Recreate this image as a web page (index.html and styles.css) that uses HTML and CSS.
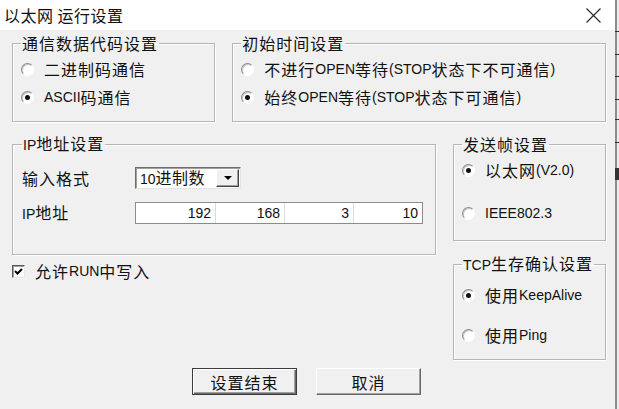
FILE: index.html
```html
<!DOCTYPE html>
<html lang="zh-CN">
<head>
    <meta charset="UTF-8">
    <title>以太网 运行设置</title>
    <link rel="stylesheet" href="styles.css">
</head>
<body>
    <div class="window">
        <div class="titlebar">
            <span class="title">以太网 运行设置</span>
            <svg class="close" width="17" height="15" viewBox="0 0 17 15">
                <path d="M1.5 0.5 L15.5 14.5 M15.5 0.5 L1.5 14.5" stroke="#2b2b2b" stroke-width="1.2" fill="none"/>
            </svg>
        </div>

        <div class="content">
            <div class="row-top">
                <fieldset class="group g-code">
                    <legend>通信数据代码设置</legend>
                    <div class="opt"><span class="radio"></span>二进制码通信</div>
                    <div class="opt"><span class="radio checked"></span><span class="en">ASCII</span>码通信</div>
                </fieldset>
                <fieldset class="group g-time">
                    <legend>初始时间设置</legend>
                    <div class="opt"><span class="radio"></span>不进行<span class="en">OPEN</span>等待<span class="en">(STOP</span>状态下不可通信<span class="en">)</span></div>
                    <div class="opt"><span class="radio checked"></span>始终<span class="en">OPEN</span>等待<span class="en">(STOP</span>状态下可通信<span class="en">)</span></div>
                </fieldset>
            </div>

            <div class="row-mid">
                <div class="col-left">
                    <fieldset class="group g-ip">
                        <legend><span class="en">IP</span>地址设置</legend>
                        <div class="field-row">
                            <span class="label">输入格式</span>
                            <div class="select">
                                <span><span class="en">10</span>进制数</span>
                                <span class="drop"><i></i></span>
                            </div>
                        </div>
                        <div class="field-row">
                            <span class="label"><span class="en">IP</span>地址</span>
                            <div class="ip">
                                <span>192</span>
                                <span>168</span>
                                <span>3</span>
                                <span>10</span>
                            </div>
                        </div>
                    </fieldset>
                    <div class="check-row">
                        <span class="check">
                            <svg width="11" height="11" viewBox="0 0 11 11">
                                <path d="M2 5 L4.5 7.5 L9 3" stroke="#000" stroke-width="2" fill="none"/>
                            </svg>
                        </span>
                        允许<span class="en">RUN</span>中写入
                    </div>
                </div>

                <div class="col-right">
                    <fieldset class="group g-frame">
                        <legend>发送帧设置</legend>
                        <div class="opt"><span class="radio checked"></span>以太网<span class="en">(V2.0)</span></div>
                        <div class="opt"><span class="radio"></span><span class="en">IEEE802.3</span></div>
                    </fieldset>
                    <fieldset class="group g-tcp">
                        <legend><span class="en">TCP</span>生存确认设置</legend>
                        <div class="opt"><span class="radio checked"></span>使用<span class="en">KeepAlive</span></div>
                        <div class="opt"><span class="radio"></span>使用<span class="en">Ping</span></div>
                    </fieldset>
                </div>
            </div>

            <div class="buttons">
                <button class="btn default">设置结束</button>
                <button class="btn">取消</button>
            </div>
        </div>
    </div>

    <div class="edge">
        <i style="margin-top: 31px"></i>
        <i style="margin-top: 22px"></i>
        <i style="margin-top: 21px"></i>
        <i style="margin-top: 22px"></i>
        <i style="margin-top: 19px"></i>
        <i style="margin-top: 22px"></i>
        <i class="block" style="margin-top: 25px"></i>
    </div>
</body>
</html>
```

FILE: styles.css
```css
* {
    margin: 0;
    padding: 0;
    box-sizing: border-box;
}

body {
    font-family: "Noto Sans CJK SC", sans-serif;
    font-size: 16px;
    line-height: 20px;
    color: #111;
    background: #f0f0f0;
    width: 619px;
    height: 409px;
    overflow: hidden;
    display: flex;
}

.window {
    width: 615px;
    height: 409px;
    background: #f0f0f0;
}

.titlebar {
    height: 30px;
    background: #fff;
    display: flex;
    align-items: center;
    justify-content: space-between;
    padding: 0 13px 0 4px;
}

.title {
    letter-spacing: 0.5px;
}

.en {
    font-family: "Liberation Sans", sans-serif;
    font-size: 14px;
    letter-spacing: 0;
}

.content {
    padding: 3px 9px 0 12px;
}

.row-top,
.row-mid {
    display: flex;
    gap: 17px;
}

.row-mid {
    margin-top: 11px;
}

.group {
    border: 1px solid #b5b5b5;
    box-shadow: inset 1px 1px 0 #fff, 1px 1px 0 #fff;
    padding: 2px 8px 10px 8px;
    letter-spacing: 1px;
}

.group legend {
    padding: 0 1px;
}

.g-code {
    width: 204px;
}

.g-time {
    width: 375px;
}

.opt {
    display: flex;
    align-items: center;
    height: 28px;
    white-space: nowrap;
}

.radio {
    width: 13px;
    height: 13px;
    border-radius: 50%;
    background: #fff;
    border: 1px solid;
    border-color: #8a8a8a #fff #fff #8a8a8a;
    box-shadow: inset 1px 1px 0 #c8c8c8;
    margin-right: 10px;
    display: flex;
    align-items: center;
    justify-content: center;
    flex-shrink: 0;
}

.radio.checked::after {
    content: "";
    width: 5px;
    height: 5px;
    border-radius: 50%;
    background: #111;
}

/* IP地址 */
.col-left {
    width: 424px;
}

.g-ip {
    width: 424px;
    padding: 12px 8px 30px 9px;
}

.field-row {
    display: flex;
    align-items: center;
    height: 22px;
}

.field-row + .field-row {
    margin-top: 13px;
}

.label {
    width: 113px;
}

.select {
    width: 106px;
    height: 22px;
    background: #fff;
    border: 1px solid;
    border-color: #6d6d6d #e3e3e3 #e3e3e3 #6d6d6d;
    box-shadow: inset 1px 1px 0 #a0a0a0;
    display: flex;
    align-items: center;
    justify-content: space-between;
    padding: 0 1px 0 4px;
    letter-spacing: 0.5px;
}

.drop {
    width: 23px;
    height: 18px;
    background: #f0f0f0;
    border: 1px solid;
    border-color: #fff #404040 #404040 #fff;
    box-shadow: inset -1px -1px 0 #a0a0a0;
    display: flex;
    align-items: center;
    justify-content: center;
}

.drop i {
    border-left: 4px solid transparent;
    border-right: 4px solid transparent;
    border-top: 4px solid #000;
}

.ip {
    width: 288px;
    height: 22px;
    background: #fff;
    border: 1px solid #8b8b8b;
    display: flex;
    font-family: "Liberation Sans", sans-serif;
    font-size: 14px;
    letter-spacing: 0;
}

.ip span {
    width: 69px;
    text-align: right;
    padding-right: 4px;
    border-left: 1px solid #dcdcdc;
}

.ip span:first-child {
    width: 79px;
    border-left: none;
}

.check-row {
    display: flex;
    align-items: center;
    height: 20px;
    margin-top: 6px;
    letter-spacing: 1px;
}

.check {
    width: 13px;
    height: 13px;
    background: #fff;
    border: 1px solid;
    border-color: #5a5a5a #e8e8e8 #e8e8e8 #5a5a5a;
    box-shadow: inset 1px 1px 0 #a0a0a0;
    margin-right: 10px;
    display: flex;
    align-items: center;
    justify-content: center;
}

/* 右侧 */
.col-right {
    width: 155px;
    padding-top: 1px;
    display: flex;
    flex-direction: column;
    gap: 12px;
}

.g-frame {
    padding-bottom: 13px;
}

.g-frame .opt + .opt {
    margin-top: 15px;
}

.g-tcp {
    padding-top: 6px;
}

.g-tcp .opt + .opt {
    margin-top: 12px;
}

.buttons {
    display: flex;
    gap: 19px;
    margin-top: 8px;
    padding-left: 180px;
}

.btn {
    width: 105px;
    height: 27px;
    background: #f0f0f0;
    font-family: inherit;
    font-size: 16px;
    letter-spacing: 1px;
    color: #111;
    border: 1px solid;
    border-color: #fff #696969 #696969 #fff;
    box-shadow: inset -1px -1px 0 #a0a0a0;
}

.btn.default {
    border: 1px solid #3c3c3c;
    box-shadow: inset 1px 1px 0 #fff, inset -1px -1px 0 #696969, inset -2px -2px 0 #a0a0a0;
}

.edge {
    width: 4px;
    height: 409px;
    border-left: 2px solid #8c8c8c;
    background: #ececec;
    display: flex;
    flex-direction: column;
}

.edge i {
    display: block;
    width: 4px;
    height: 1px;
    margin-left: -2px;
    background: #333;
}

.edge i.block {
    height: 12px;
}
```
